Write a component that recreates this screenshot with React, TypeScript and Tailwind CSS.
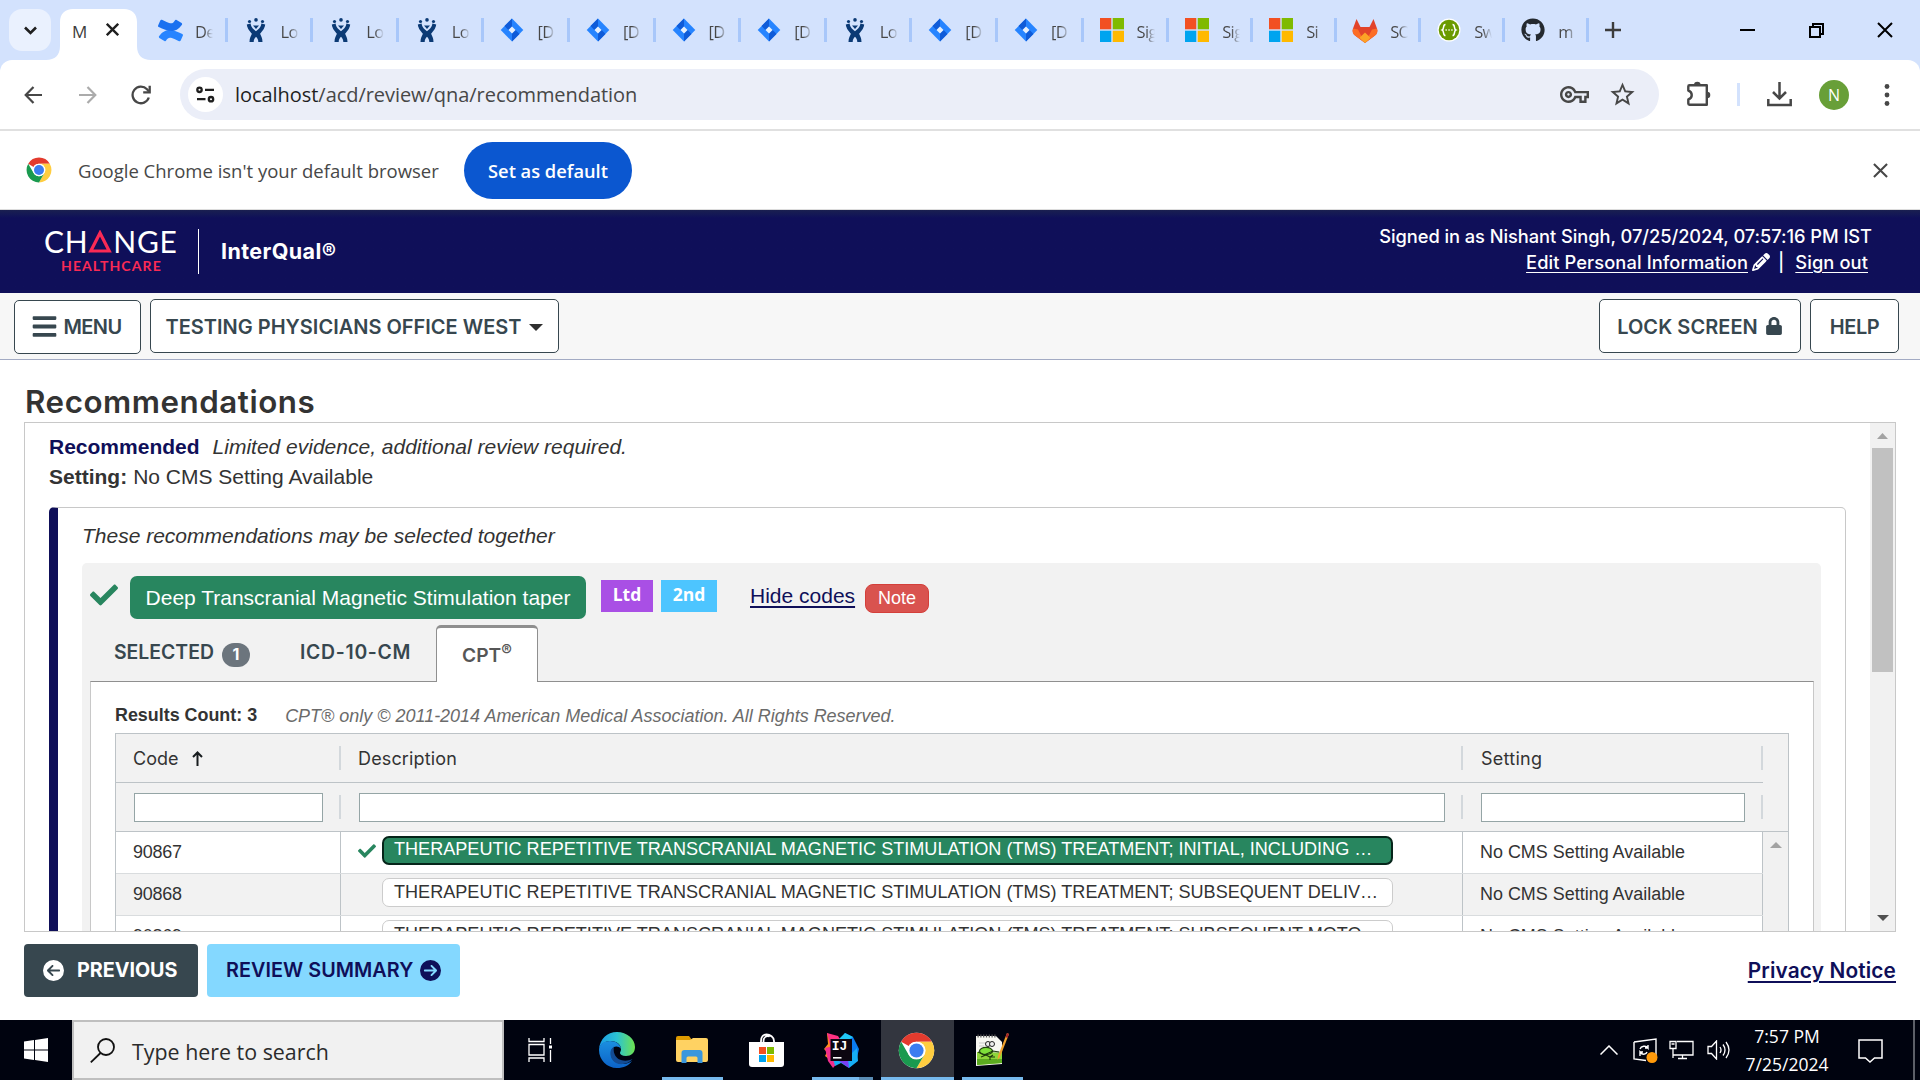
import type { ReactNode } from 'react';
import { FaBars, FaCheck, FaGithub, FaLock } from 'react-icons/fa';
import { FaCircleArrowLeft, FaCircleArrowRight, FaPencil } from 'react-icons/fa6';
import { MdOutlineVpnKey, MdStarOutline } from 'react-icons/md';

/* ---------- Browser icons ---------- */

function ConfluenceIcon() {
  return (
    <svg width="25" height="25" viewBox="0 0 24 24">
      <path d="M1 17.6c-.4.6 0 1.3.3 1.5l4.9 3c.6.4 1.3.2 1.6-.4 2-3.4 3.6-3.5 8-1.5l4.400 2.100c.6.3 1.300 0 1.600-.6l2.100-4.900c.2-.5 0-1.200-.6-1.500C15 11.400 7.500 8.500 1 17.600z" fill="#2684ff" />
      <path d="M23 6.400c.4-.6 0-1.300-.3-1.500l-4.900-3c-.6-.4-1.300-.2-1.600.4-2 3.400-3.600 3.500-8 1.500L3.800 1.700c-.6-.3-1.300 0-1.600.6L.1 7.200c-.2.5 0 1.200.6 1.500C9 12.600 16.500 15.500 23 6.400z" fill="#1a70f0" />
    </svg>
  );
}

function JiraManIcon() {
  return (
    <svg width="20" height="25" viewBox="0 0 20 25" fill="#0b3a75">
      <circle cx="3.500" cy="3.500" r="1.600" />
      <circle cx="10" cy="1.900" r="1.800" />
      <circle cx="16.500" cy="3.500" r="1.600" />
      <path d="M7 7.500h6l-3 3.600z" />
      <path d="M.8 6.500 4.600 5.600c.6 4.200 3 5.700 5.400 7.700 2.400-2 4.800-3.500 5.400-7.700l3.800.9c-.6 4.700-3.400 7-5.100 9.300 1 2.300 2.400 4.200 2.400 8.200h-4.200c0-2.500-1-4-2.300-5.300C8.700 20 7.700 21.500 7.700 24H3.500c0-4 1.400-5.900 2.400-8.200C4.200 13.500 1.400 11.200.8 6.500z" />
    </svg>
  );
}

function JiraIcon() {
  return (
    <svg width="24" height="24" viewBox="0 0 24 24">
      <path d="M12 .6 23.300 12 12 23.400.7 12z" fill="#2684ff" />
      <path d="M12 .6v7.800L8.400 12 4.500 8.100z" fill="#0f5bd8" />
      <path d="M12 23.400v-7.800l3.600-3.600 3.900 3.900z" fill="#0f5bd8" />
      <path d="M12 8.500 15.500 12 12 15.500 8.500 12z" fill="#e6effc" />
    </svg>
  );
}

function MicrosoftIcon() {
  return (
    <svg width="24" height="24" viewBox="0 0 24 24">
      <path d="M0 0h11.300v11.300H0z" fill="#f25022" />
      <path d="M12.700 0H24v11.300H12.700z" fill="#7fba00" />
      <path d="M0 12.700h11.300V24H0z" fill="#00a4ef" />
      <path d="M12.700 12.700H24V24H12.700z" fill="#ffb900" />
    </svg>
  );
}

function GitlabIcon() {
  return (
    <svg width="26" height="25" viewBox="0 0 26 25">
      <path d="M4.500 1 1 10.500c-1 3 0 5.500 2 7L13 25l10-7.500c2-1.500 3-4 2-7L21.500 1 17.500 9h-9z" fill="#e24329" />
      <path d="m1 10.500 5 1L13 25 3 17.500c-2-1.500-3-4-2-7zM25 10.500l-5 1L13 25l10-7.500c2-1.500 3-4 2-7z" fill="#fc6d26" />
      <path d="m13 14.500 5.500 5.200L13 25l-5.500-5.300z" fill="#fca326" />
    </svg>
  );
}

function SwaggerIcon() {
  return (
    <svg width="24" height="24" viewBox="0 0 24 24" fill="none">
      <circle cx="12" cy="12" r="11.500" fill="#fff" />
      <circle cx="12" cy="12" r="10.300" fill="#6a9a00" />
      <path d="M8.500 6.500c-3 0-1 4.500-3.300 5.500 2.300 1 .3 5.500 3.300 5.500M15.500 6.500c3 0 1 4.500 3.300 5.500-2.300 1-.3 5.500-3.300 5.500" stroke="#fff" strokeWidth="1.500" />
      <path d="M8.500 12h1.300M11.400 12h1.300M14.300 12h1.300" stroke="#fff" strokeWidth="1.500" />
    </svg>
  );
}

function ExtensionIcon() {
  return (
    <svg width="25" height="27" viewBox="0 0 25 27" fill="none">
      <path d="M3.500 5.200h17.300v19.600H3.500q-1.200 0-1.200-1.200v-4.200c4.600-1.500 4.600-7.300 0-8.800V6.400q0-1.200 1.200-1.200z" stroke="#474747" strokeWidth="2.400" strokeLinejoin="round" />
      <path d="M8 5a3.300 3.300 0 0 1 6.600 0zM21 11.700a3.300 3.300 0 0 1 0 6.600z" fill="#474747" />
    </svg>
  );
}

function ChromeIcon({ size }: { size: number }) {
  return (
    <svg width={size} height={size} viewBox="0 0 48 48">
      <circle cx="24" cy="24" r="23" fill="#fff" />
      <path d="M24 1a23 23 0 0 1 19.900 11.500H24A11.500 11.500 0 0 0 14 18.300L4.100 12.500A23 23 0 0 1 24 1z" fill="#e33b2e" />
      <path d="M43.900 12.500A23 23 0 0 1 24 47l10-17.250a11.500 11.500 0 0 0 0-11.500A11.500 11.500 0 0 0 24 12.500z" fill="#ffcd40" />
      <path d="M4.100 12.500 14 29.750A11.500 11.500 0 0 0 24 35.500a11.500 11.500 0 0 0 10-5.750L24 47A23 23 0 0 1 4.100 12.500z" fill="#1a9a4f" />
      <circle cx="24" cy="24" r="11.500" fill="#fff" />
      <circle cx="24" cy="24" r="9.200" fill="#3b7df0" />
    </svg>
  );
}

function Cross({ size, stroke, color }: { size: number; stroke: number; color: string }) {
  return (
    <svg width={size} height={size} viewBox="0 0 16 16" stroke={color} strokeWidth={stroke}>
      <path d="m1 1 14 14M15 1 1 15" />
    </svg>
  );
}

/* ---------- Tab strip ---------- */

const tabs: { icon: ReactNode; label: string; narrow?: boolean }[] = [
  { icon: <ConfluenceIcon />, label: 'De' },
  { icon: <JiraManIcon />, label: 'Lo' },
  { icon: <JiraManIcon />, label: 'Lo' },
  { icon: <JiraManIcon />, label: 'Lo' },
  { icon: <JiraIcon />, label: '[D' },
  { icon: <JiraIcon />, label: '[D' },
  { icon: <JiraIcon />, label: '[D' },
  { icon: <JiraIcon />, label: '[D' },
  { icon: <JiraManIcon />, label: 'Lo' },
  { icon: <JiraIcon />, label: '[D' },
  { icon: <JiraIcon />, label: '[D' },
  { icon: <MicrosoftIcon />, label: 'Sig' },
  { icon: <MicrosoftIcon />, label: 'Sig', narrow: true },
  { icon: <MicrosoftIcon />, label: 'Si', narrow: true },
  { icon: <GitlabIcon />, label: 'SO', narrow: true },
  { icon: <SwaggerIcon />, label: 'Sw', narrow: true },
  { icon: <FaGithub className="size-6 text-[#24292f]" />, label: 'm', narrow: true },
];

function TabStrip() {
  return (
    <div className="flex h-[60px] items-center bg-[#d3e2fd]">
      <div className="ml-[9px] flex size-[42px] items-center justify-center rounded-[13px] bg-[#eaf1fe]">
        <svg width="13" height="9" viewBox="0 0 13 9" fill="none" stroke="#1f1f1f" strokeWidth="2.600">
          <path d="m1 1.500 5.500 5.500L12 1.500" />
        </svg>
      </div>
      <div className="relative ml-[9px] h-full w-[82px]">
        <svg className="absolute top-[9px] -left-[14px]" width="106" height="51" viewBox="0 0 106 51" fill="#fff">
          <path d="M0 51c9 0 14-5 14-14V13C14 5 19 0 27 0h51c8 0 13 5 13 13v24c0 9 5 14 14 14z" />
        </svg>
        <div className="relative flex h-full items-center pt-0.5">
          <span className="ml-[12px] w-[16px] text-[17px] leading-none text-[#3c3c3c]">M</span>
          <span className="ml-[18px] -mt-1">
            <Cross size={13} stroke={2.900} color="#1f1f1f" />
          </span>
        </div>
      </div>
      {tabs.map((tab, i) => (
        <div key={i} className={`flex h-6 shrink-0 items-center border-r-[3px] border-[#a8c7fa] ${tab.narrow ? 'w-[84px]' : 'w-[85.600px]'}`}>
          <span className="ml-[15px] flex w-[26px] justify-center">{tab.icon}</span>
          <span className="mt-[3px] ml-[12px] w-[18px] overflow-hidden bg-linear-to-r from-[#474747] from-50% to-transparent bg-clip-text text-[16.500px] leading-[24px] tracking-[-0.600px] text-transparent">
            {tab.label}
          </span>
        </div>
      ))}
      <svg className="ml-[16px]" width="16" height="16" viewBox="0 0 16 16" stroke="#3c3c3c" strokeWidth="2.400">
        <path d="M8 0v16M0 8h16" />
      </svg>
      <div className="mr-[27px] ml-auto flex items-center">
        <svg width="15" height="2" viewBox="0 0 15 2"><path d="M0 0h15v2H0z" /></svg>
        <svg className="ml-[54px]" width="15" height="15" viewBox="0 0 15 15" fill="none" stroke="#000" strokeWidth="2">
          <path d="M1 4h10v10H1zM4 4V1h10v10h-3" />
        </svg>
        <span className="ml-[53px]">
          <Cross size={16} stroke={2} color="#000" />
        </span>
      </div>
    </div>
  );
}

function Toolbar() {
  return (
    <div className="bg-[#d3e2fd]">
      <div className="flex h-[71px] items-center rounded-t-[12px] border-b-2 border-[#e0e0e0] bg-white">
        <svg className="ml-[24px]" width="19" height="18" viewBox="0 0 19 18" fill="none" stroke="#474747" strokeWidth="2.200">
          <path d="M18 9H2M9.500 1 1.700 9l7.800 8" />
        </svg>
        <svg className="ml-[35px]" width="19" height="18" viewBox="0 0 19 18" fill="none" stroke="#ababab" strokeWidth="2.200">
          <path d="M1 9h16M9.500 1l7.800 8-7.800 8" />
        </svg>
        <svg className="ml-[34px]" width="20" height="20" viewBox="0 0 20 20" fill="none" stroke="#474747" strokeWidth="2.300">
          <path d="M17.800 12.500A8.300 8.300 0 1 1 16 4.300l2 2.200" />
          <path d="M18.700.8v6.500h-6.500" />
        </svg>
        <div className="ml-[29px] flex h-[51px] w-[1479px] items-center rounded-full bg-[#ebeef8]">
          <div className="ml-[8px] flex size-[35px] items-center justify-center rounded-full bg-white">
            <svg width="19" height="17" viewBox="0 0 19 17" fill="none" stroke="#1f1f1f" strokeWidth="2.300">
              <circle cx="3.500" cy="3.800" r="2.200" />
              <path d="M9 3.800h9M1 13.200h8.500" />
              <circle cx="15" cy="13.200" r="2.200" />
            </svg>
          </div>
          <span className="ml-[12px] text-[20px] leading-[28px] tracking-[-0.050px] text-[#474747]">
            <span className="text-[#1f1f1f]">localhost</span>/acd/review/qna/recommendation
          </span>
          <MdOutlineVpnKey className="mr-[19px] ml-auto size-[29px] text-[#474747]" />
          <MdStarOutline className="mr-[22px] size-[29px] text-[#474747]" />
        </div>
        <span className="-mt-[3px] ml-[27px]"><ExtensionIcon /></span>
        <div className="ml-[26px] h-[23px] w-[3px] bg-[#d3e2fd]" />
        <svg className="ml-[27px]" width="25" height="25" viewBox="0 0 25 25" fill="none" stroke="#474747" strokeWidth="2.500">
          <path d="M12.500 0v16M6 10l6.500 6.500L19 10M1.300 17v6h22.400v-6" />
        </svg>
        <div className="ml-[27px] flex size-[30px] items-center justify-center rounded-full bg-[#689f38] text-[16px] leading-none text-white">N</div>
        <svg className="ml-[35px]" width="6" height="22" viewBox="0 0 6 22" fill="#474747">
          <circle cx="3" cy="2.500" r="2.400" />
          <circle cx="3" cy="11" r="2.400" />
          <circle cx="3" cy="19.500" r="2.400" />
        </svg>
      </div>
    </div>
  );
}

function InfoBar() {
  return (
    <div className="flex h-[79px] items-center border-b border-[#dcdcdc] bg-white">
      <span className="ml-[26px]"><ChromeIcon size={26} /></span>
      <span className="mt-[2px] ml-[26px] w-[361px] text-[18.500px] leading-[26px] whitespace-nowrap text-[#474747]">
        Google Chrome isn't your default browser
      </span>
      <button className="ml-[25px] flex h-[57px] w-[168px] items-center justify-center rounded-full bg-[#0b57d0] pt-[2px] text-[18.300px] font-semibold text-white">
        Set as default
      </button>
      <span className="mr-[32px] ml-auto">
        <Cross size={15} stroke={2.200} color="#474747" />
      </span>
    </div>
  );
}

/* ---------- Application header ---------- */

function Header() {
  return (
    <div className="flex h-[83px] bg-linear-to-b from-[#1a1f50] to-[#0f0f59] to-[8px] font-['Inter',sans-serif] text-white">
      <div className="mt-[18px] ml-[44px] w-[134px]">
        <div className="flex h-[27px] w-[133px] items-center justify-between font-['Lato',sans-serif] text-[30px] leading-[27px]">
          <span>C</span>
          <span>H</span>
          <svg width="24" height="23" viewBox="0 0 24 23" fill="none" stroke="#fa2a55" strokeWidth="3.200">
            <path d="M12 3 2.800 21h18.400z" />
          </svg>
          <span>N</span>
          <span>G</span>
          <span>E</span>
        </div>
        <div className="mt-[2px] ml-[17px] font-['Lato',sans-serif] text-[14px] leading-[18px] font-bold tracking-[1.100px] text-[#fa2a55]">HEALTHCARE</div>
      </div>
      <div className="mt-[19px] ml-[20px] h-[45px] w-px bg-white" />
      <div className="mt-[26px] ml-[22px] text-[21.500px] leading-[30px] font-bold tracking-[0.400px]">InterQual®</div>
      <div className="mt-[13px] mr-[48px] ml-auto flex flex-col items-end text-[18.300px] leading-[26px]">
        <div className="font-medium tracking-[-0.060px]">Signed in as Nishant Singh, 07/25/2024, 07:57:16 PM IST</div>
        <div className="mr-[4px] flex items-center font-medium">
          <span className="tracking-[0.100px] underline underline-offset-[3px]">Edit Personal Information</span>
          <FaPencil className="ml-[4px] size-[18px]" />
          <span className="ml-[8px]">|</span>
          <span className="ml-[11px] tracking-[0.100px] underline underline-offset-[3px]">Sign out</span>
        </div>
      </div>
    </div>
  );
}

function OutlineButton({ children, className }: { children: ReactNode; className: string }) {
  return (
    <button className={`flex h-[54px] items-center justify-center rounded-[5px] border border-[#37474f] bg-white pt-px text-[20px] font-semibold whitespace-nowrap text-[#37474f] ${className}`}>
      {children}
    </button>
  );
}

function ActionBar() {
  return (
    <div className="flex h-[67px] items-start border-b border-[#a3abc4] bg-[#f7f7f7] pt-[6px] font-['Inter',sans-serif]">
      <OutlineButton className="mt-px ml-[14px] h-[53px] w-[127px] pr-[2px] pb-[2px]">
        <FaBars className="mr-[5px] size-[27px]" />
        <span className="tracking-[-0.600px]">MENU</span>
      </OutlineButton>
      <OutlineButton className="ml-[9px] w-[409px] text-[#2f2f2f]">
        TESTING PHYSICIANS OFFICE WEST
        <svg className="mt-px ml-[8px]" width="14" height="7" viewBox="0 0 14 7" fill="#2f2f2f"><path d="M0 0h14L7 7z" /></svg>
      </OutlineButton>
      <OutlineButton className="ml-auto w-[202px]">
        <span className="tracking-[0.050px]">LOCK SCREEN</span>
        <FaLock className="-mt-px ml-[7px] size-[18px]" />
      </OutlineButton>
      <OutlineButton className="mr-[21px] ml-[9px] w-[89px]">
        <span className="tracking-[-0.400px]">HELP</span>
      </OutlineButton>
    </div>
  );
}

/* ---------- Recommendations ---------- */

const rows = [
  { code: '90867', text: 'THERAPEUTIC REPETITIVE TRANSCRANIAL MAGNETIC STIMULATION (TMS) TREATMENT; INITIAL, INCLUDING …', selected: true },
  { code: '90868', text: 'THERAPEUTIC REPETITIVE TRANSCRANIAL MAGNETIC STIMULATION (TMS) TREATMENT; SUBSEQUENT DELIV…', selected: false },
  { code: '90869', text: 'THERAPEUTIC REPETITIVE TRANSCRANIAL MAGNETIC STIMULATION (TMS) TREATMENT; SUBSEQUENT MOTO…', selected: false },
];

function HeaderCell({ children, className }: { children: ReactNode; className: string }) {
  return (
    <div className={`flex h-[48px] items-center pl-[18px] ${className}`}>
      {children}
      <div className="ml-auto h-[24px] w-[2px] bg-[#d3d8dc]" />
    </div>
  );
}

function CodesTable() {
  return (
    <div className="mt-[5px] w-[1674px] border border-[#bdc3c7] bg-[#f2f2f2]">
      <div className="flex w-[1647px] border-b border-[#bdc3c7] font-['Inter',sans-serif] text-[18px] text-[#333]">
        <HeaderCell className="w-[225px]">
          <span className="mt-px -ml-px">Code</span>
          <svg className="ml-[14px]" width="11" height="15" viewBox="0 0 11 15" fill="none" stroke="#181d1f" strokeWidth="2">
            <path d="M5.500 15V2M1 6l4.500-4.500L10 6" />
          </svg>
        </HeaderCell>
        <HeaderCell className="w-[1122px]"><span className="mt-px -ml-px tracking-[0.150px]">Description</span></HeaderCell>
        <HeaderCell className="w-[300px]"><span className="mt-px tracking-[0.250px]">Setting</span></HeaderCell>
      </div>
      <div className="flex h-[49px] border-b border-[#bdc3c7]">
        <HeaderCell className="w-[225px]"><div className="h-[29px] w-[189px] border border-[#95a5a6] bg-white" /></HeaderCell>
        <HeaderCell className="w-[1122px]"><div className="h-[29px] w-[1086px] border border-[#95a5a6] bg-white" /></HeaderCell>
        <HeaderCell className="w-[300px]"><div className="h-[29px] w-[264px] border border-[#95a5a6] bg-white" /></HeaderCell>
      </div>
      <div className="flex">
        <div className="w-[1647px]">
          {rows.map((row) => (
            <div key={row.code} className="flex h-[42px] border-b border-[#d9dcde] bg-white text-[17.950px] leading-[41px] text-[#333] even:bg-[#f2f2f2]">
              <div className="w-[225px] border-r border-[#bdc3c7] pl-[17px] tracking-[-0.200px]">{row.code}</div>
              <div className="flex w-[1122px] border-r border-[#bdc3c7]">
                <span className="mt-[10px] ml-[17px] w-[19px]">{row.selected && <FaCheck className="size-[18px] text-[#28865f]" />}</span>
                <div
                  className={`mt-[4px] ml-[5px] h-[29px] w-[1011px] rounded-[7px] text-[18.080px] whitespace-nowrap ${
                    row.selected ? 'border-2 border-[#06251a] bg-[#28865f] pl-[10px] leading-[23px] text-white' : 'border border-[#ccc] bg-white pl-[11px] leading-[26px]'
                  }`}
                >
                  {row.text}
                </div>
              </div>
              <div className="w-[300px] border-r border-[#bdc3c7] pl-[17px]">No CMS Setting Available</div>
            </div>
          ))}
        </div>
        <div className="w-[25px] bg-[#f1f1f1] pt-[10px]">
          <svg className="mx-auto" width="12" height="6" viewBox="0 0 12 6" fill="#a3a3a3"><path d="M6 0l6 6H0z" /></svg>
        </div>
      </div>
    </div>
  );
}

function RecommendationPanel() {
  return (
    <div className="mx-[24px] mt-[2px] flex h-[510px] overflow-hidden border border-[#c8c8c8] bg-white text-[21px] leading-[30px] text-[#333]">
      <div className="h-[700px] flex-1 px-[24px] pt-[9px]">
        <div className="whitespace-pre">
          <b className="text-[#0f0f59]">Recommended</b>
          <i className="ml-[13px]">Limited evidence, additional review required.</i>
        </div>
        <div>
          <b className="mr-[6px]">Setting:</b>No CMS Setting Available
        </div>
        <div className="mt-[15px] h-[600px] rounded-[5px] border border-l-[9px] border-[#c8c8c8] border-l-[#0f0f59] px-[24px] pt-[13px]">
          <i className="block">These recommendations may be selected together</i>
          <div className="mt-[12px] h-[520px] rounded-[5px] bg-[#f2f2f2] pr-[7px] pl-[8px]">
            <div className="flex h-[62px] items-start">
              <FaCheck className="mt-[18px] size-[28px] text-[#28865f]" />
              <div className="mt-[13px] ml-[12px] h-[43px] w-[456px] rounded-[7px] bg-[#28865f] text-center leading-[43px] text-white">
                Deep Transcranial Magnetic Stimulation taper
              </div>
              <div className="mt-[17px] ml-[15px] h-[32px] w-[52px] bg-[#a94fe5] text-center font-['Open_Sans',sans-serif] text-[17.500px] leading-[29px] font-bold text-white">Ltd</div>
              <div className="mt-[17px] ml-[8px] h-[32px] w-[56px] bg-[#4dc5ff] text-center font-['Open_Sans',sans-serif] text-[17.500px] leading-[29px] font-bold text-white">2nd</div>
              <div className="mt-[18px] ml-[33px] text-[#0f0f59] underline decoration-2 underline-offset-[3px]">Hide codes</div>
              <div className="mt-[21px] ml-[10px] h-[29px] w-[64px] rounded-[8px] border border-[#d43f3a] bg-[#d9534f] text-center text-[18px] leading-[26px] text-white">Note</div>
            </div>
            <div className="flex h-[56px] font-['Inter',sans-serif] text-[19.400px] font-semibold text-[#37474f]">
              <span className="mt-[12px] ml-[24px] w-[100px]">SELECTED</span>
              <span className="mt-[18px] ml-[8px] h-[24px] w-[28px] rounded-full bg-[#6c757d] text-center text-[16px] leading-[23px] font-bold text-white">1</span>
              <span className="mt-[12px] ml-[50px] w-[112px] tracking-[0.700px] whitespace-nowrap">ICD-10-CM</span>
              <div className="relative ml-[24px] h-[57px] w-[102px] rounded-t-[5px] border border-t-[3px] border-b-0 border-[#8f8f8f] bg-white pt-[12px] text-center text-[19.200px] text-[#565656]">
                CPT<span className="relative -top-[6px] text-[16px]">®</span>
              </div>
            </div>
            <div className="h-[400px] border border-t-[#8f8f8f] border-r-[#c8c8c8] border-l-[#c8c8c8] bg-white pt-[21px] pl-[24px]">
              <div className="flex text-[17.900px] leading-[24px]">
                <b>Results Count: 3</b>
                <i className="mt-px ml-[28px] text-[17.980px] text-[#6b6b6b]">CPT® only © 2011-2014 American Medical Association. All Rights Reserved.</i>
              </div>
              <CodesTable />
            </div>
          </div>
        </div>
      </div>
      <div className="flex w-[25px] shrink-0 flex-col items-center bg-[#f1f1f1]">
        <svg className="mt-[10px] shrink-0" width="11" height="6" viewBox="0 0 11 6" fill="#a3a3a3"><path d="M5.500 0 11 6H0z" /></svg>
        <div className="mt-[9px] h-[224px] w-[21px] shrink-0 bg-[#c1c1c1]" />
        <svg className="mt-auto mb-[10px] shrink-0" width="12" height="6" viewBox="0 0 12 6" fill="#505050"><path d="M0 0h12L6 6z" /></svg>
      </div>
    </div>
  );
}

function Footer() {
  return (
    <div className="flex h-[88px] items-start bg-white px-[24px] pt-[12px] font-['Inter',sans-serif] text-[19.800px] font-semibold">
      <button className="flex h-[53px] w-[174px] items-center rounded-[4px] bg-[#37474f] pl-[19px] font-bold text-white">
        <FaCircleArrowLeft className="mr-[13px] size-[21px]" />
        <span className="tracking-[-0.050px]">PREVIOUS</span>
      </button>
      <button className="ml-[9px] flex h-[53px] w-[253px] items-center rounded-[4px] bg-[#84d8ff] pl-[19px] whitespace-nowrap text-[#0f0f59]">
        <span className="w-[194px] text-left tracking-[0.050px]">REVIEW SUMMARY</span>
        <FaCircleArrowRight className="size-[21px]" />
      </button>
      <span className="mt-[12px] ml-auto text-[20.800px] leading-[30px] tracking-[0.150px] text-[#0f0f59] underline decoration-2 underline-offset-[3px]">Privacy Notice</span>
    </div>
  );
}

/* ---------- Windows taskbar ---------- */

function EdgeIcon() {
  return (
    <svg width="36" height="36" viewBox="0 0 36 36">
      <defs>
        <linearGradient id="edgeTop" x1="0" y1="0.500" x2="1" y2="0.500">
          <stop offset="0" stopColor="#1a9be6" />
          <stop offset="0.500" stopColor="#2cc3d2" />
          <stop offset="1" stopColor="#6ee34f" />
        </linearGradient>
        <linearGradient id="edgeBody" x1="0" y1="0" x2="0" y2="1">
          <stop offset="0" stopColor="#1b8fe0" />
          <stop offset="1" stopColor="#0c63c8" />
        </linearGradient>
      </defs>
      <path d="M0 17C1 7 8 0 18 0s18 7 18 15c0 6-4 9-9 9-4 0-6-1.500-6-3 0-1 1-1.500 1-4 0-4-4-8-10-8C6 9 1 12 0 17z" fill="url(#edgeTop)" />
      <path d="M0 18c0-6 5-9 11-9 6 0 10.500 3.500 11 8-3-4-9-3-10 3-1 7 5 12 12 12 4 0 7-1.500 9-3-3 4.500-8.500 7-15 7C8 36 0 28 0 18z" fill="url(#edgeBody)" />
      <path d="M15 14.500c-3 2-4 5-3.500 8C12 29 18 33 24 32c4-.5 7-2 9.500-5-6 3-15 2.500-18-5-1-2.500-1-5-.5-7.500z" fill="#134c94" />
    </svg>
  );
}

function ExplorerIcon() {
  return (
    <svg width="32" height="28" viewBox="0 0 32 28">
      <path d="M0 2q0-2 2-2h11l3 4H0z" fill="#dd9a00" />
      <path d="M0 4h14l3-2h13q2 0 2 2v20q0 2-2 2H2q-2 0-2-2z" fill="#ffd262" />
      <path d="M5.500 27V17q0-3 3-3h15q3 0 3 3v10h-5v-5q0-1.500-1.500-1.500h-8q-1.500 0-1.500 1.500v5z" fill="#3a97dd" />
    </svg>
  );
}

function StoreIcon() {
  return (
    <svg width="35" height="34" viewBox="0 0 35 34">
      <path d="M12 11V8c0-4 2-6.500 5.500-6.500S25 4 25 8v3M14.500 11V8c0-4 3-5.500 6-4.500" fill="none" stroke="#fff" strokeWidth="1.800" />
      <path d="M0 9h35v22q0 3-3 3H3q-3 0-3-3z" fill="#fff" />
      <path d="M10 14h7v7h-7z" fill="#f25022" />
      <path d="M18 14h7v7h-7z" fill="#7fba00" />
      <path d="M10 22h7v7h-7z" fill="#00a4ef" />
      <path d="M18 22h7v7h-7z" fill="#ffb900" />
    </svg>
  );
}

function IntelliJIcon() {
  return (
    <div className="relative flex size-[36px] items-center justify-center">
      <svg className="absolute" width="36" height="36" viewBox="0 0 36 36">
        <path d="M3 1 13 8 9 30 1 24l2-4-3-3 4-5z" fill="#ff8a1e" />
        <path d="M3 1 14 4l3 5-10 8z" fill="#fc3181" />
        <path d="M1 16 10 14l6 14-7 8-5-7z" fill="#f02e8c" />
        <path d="m21 1 8 4 6 12-3 13-10-6-4-18z" fill="#0a7cf2" />
        <path d="m21 1 8 4-8 5-6-3z" fill="#21c8f5" />
        <path d="m9 27 14-1 10-10 1 13-9 7-8-5-6 3z" fill="#16aef5" />
        <path d="m15 29 9-2 1 9z" fill="#7b3ff2" />
        <path d="M6.500 7h21.500v22H6.500z" fill="#0c0610" />
        <path d="M9 25h8.500v1.600H9z" fill="#fff" />
      </svg>
      <span className="relative -top-[4px] -left-[2px] font-['Liberation_Mono',monospace] text-[13px] leading-none font-bold text-white">IJ</span>
    </div>
  );
}

function NotepadIcon() {
  return (
    <svg width="34" height="36" viewBox="0 0 34 36" fill="none">
      <path d="M1 4h20l6 6v22L1 34z" fill="#f7f7f2" />
      <path d="M2 20h25v11L2 33z" fill="#8ed63a" />
      <path d="M2 27h25v4L2 33z" fill="#5cab20" />
      <path d="M2.500 4h18" stroke="#555" strokeWidth="3" strokeDasharray="1.200 1.600" />
      <path d="M4 11h7M4 14h5M18 20h8" stroke="#c9c9c9" />
      <ellipse cx="11" cy="19" rx="6.500" ry="3.600" fill="#7ee03a" stroke="#23440f" strokeWidth="1.200" />
      <circle cx="13" cy="12" r="2.500" fill="#eee" stroke="#222" />
      <circle cx="17" cy="12" r="2.500" fill="#eee" stroke="#222" />
      <path d="m3 20 6 3 9-4 6 1M6 25l5-2 4 2 3-2M15 28v-3h5" stroke="#1d3a0c" strokeWidth="1.100" />
      <path d="m32 1 2 1-9 23-2.500 3 .5-4z" fill="#f0a22e" />
      <path d="m32 1 2 1-1.500 4-2-1z" fill="#a3242a" />
    </svg>
  );
}

function TaskbarApp({ children, className = '', bar }: { children: ReactNode; className?: string; bar?: ReactNode }) {
  return (
    <div className={`flex h-[60px] w-[73px] shrink-0 flex-col items-center ${className}`}>
      <div className="flex h-[57px] items-center pt-[3px] pr-[2px]">{children}</div>
      {bar}
    </div>
  );
}

function Taskbar() {
  return (
    <div className="flex h-[60px] items-center bg-[#00030f]">
      <svg className="ml-[24px]" width="24" height="24" viewBox="0 0 24 24" fill="#fff">
        <path d="M0 3.400 10 2v9.400H0zM11 1.900 24 0v11.400H11zM0 12.400h10V22L0 20.600zM11 12.400h13V24l-13-1.900z" />
      </svg>
      <div className="ml-[24px] flex h-[60px] w-[432px] items-center border-2 border-[#bfbfbf] bg-[#f1f1f1]">
        <svg className="ml-[16px]" width="25" height="25" viewBox="0 0 25 25" fill="none" stroke="#111" strokeWidth="1.800">
          <circle cx="16" cy="9" r="8" />
          <path d="M10.500 15 .8 24.300" />
        </svg>
        <span className="mt-[3px] ml-[17px] text-[21.400px] leading-[30px] text-[#2b2b2b]">Type here to search</span>
      </div>
      <svg className="ml-[24px]" width="25" height="24" viewBox="0 0 25 24" fill="none" stroke="#fff" strokeWidth="1.300">
        <path d="M1 0v3.500h15V0M1 6.500h15v10.500H1zM1 24v-4h15v4M22.500 0v6M22.500 12v12" />
        <path d="M21 7.500h3v3h-3z" fill="#fff" stroke="none" />
      </svg>
      <TaskbarApp className="ml-[28px]"><EdgeIcon /></TaskbarApp>
      <TaskbarApp className="ml-[2px]" bar={<div className="h-[3px] w-[61px] bg-[#76b9ed]" />}><ExplorerIcon /></TaskbarApp>
      <TaskbarApp className="ml-[2px]"><StoreIcon /></TaskbarApp>
      <TaskbarApp className="ml-[2px]" bar={<div className="h-[3px] w-[61px] border-r-[14px] border-[#5a8cb4] bg-[#76b9ed]" />}><IntelliJIcon /></TaskbarApp>
      <TaskbarApp className="ml-[2px] bg-[#33363f]" bar={<div className="h-[3px] w-full bg-[#76b9ed]" />}><ChromeIcon size={37} /></TaskbarApp>
      <TaskbarApp className="ml-[2px]" bar={<div className="h-[3px] w-[61px] bg-[#76b9ed]" />}><NotepadIcon /></TaskbarApp>
      <svg className="ml-auto" width="18" height="10" viewBox="0 0 18 10" fill="none" stroke="#fff" strokeWidth="1.500">
        <path d="m.5 9.500 8.500-8.500 8.500 8.500" />
      </svg>
      <svg className="ml-[15px]" width="25" height="25" viewBox="0 0 25 25" fill="none" stroke="#fff" strokeWidth="1.400">
        <path d="M1 4 23 1v20M1 4v17l12 1.500" />
        <path d="M7 11c1-3 6-4 8-1V7m0 3h-3M14 14c-1 3-5 3-7 0v4m0-4h3" />
        <circle cx="19" cy="19.500" r="5.500" fill="#ff9a0a" stroke="none" />
      </svg>
      <svg className="ml-[11px]" width="25" height="20" viewBox="0 0 25 20" fill="none" stroke="#fff" strokeWidth="1.300">
        <path d="M8 1.500h16v13.500H4M1 1.500h6v7H1zM4 8.500V18M13.500 15v3.500M9 18.500h9M2.500 4h3" />
      </svg>
      <svg className="ml-[13px]" width="23" height="20" viewBox="0 0 23 20" fill="none" stroke="#fff" strokeWidth="1.300">
        <path d="M1 6.500h3.500L9.500 1v18l-5-5.500H1z" />
        <path d="M13 7q2 3 0 6M16 4.500q4 5.500 0 11M19 2q6 8 0 16" />
      </svg>
      <div className="mr-[28px] ml-[14px] w-[86px] text-center text-[17.500px] leading-[28px] tracking-[0.010px] text-white">
        <div>7:57 PM</div>
        <div>7/25/2024</div>
      </div>
      <svg className="mt-[2px] mr-[30px]" width="25" height="24" viewBox="0 0 25 24" fill="none" stroke="#fff" strokeWidth="1.500">
        <path d="M1 1h23v18h-7.500L12 23l-4.500-4H1z" />
      </svg>
      <div className="mr-[5px] h-full w-[2px] bg-[#5c5f68]" />
    </div>
  );
}

export default function App() {
  return (
    <div className="flex h-[1080px] w-[1920px] flex-col overflow-hidden bg-white font-['Open_Sans',sans-serif]">
      <TabStrip />
      <Toolbar />
      <InfoBar />
      <Header />
      <ActionBar />
      <h1 className="mt-[24px] ml-[25px] font-['Inter',sans-serif] text-[31.300px] leading-[36px] font-semibold tracking-[0.550px] text-[#333]">
        Recommendations
      </h1>
      <div className="font-['Liberation_Sans',sans-serif]">
        <RecommendationPanel />
      </div>
      <Footer />
      <Taskbar />
    </div>
  );
}
